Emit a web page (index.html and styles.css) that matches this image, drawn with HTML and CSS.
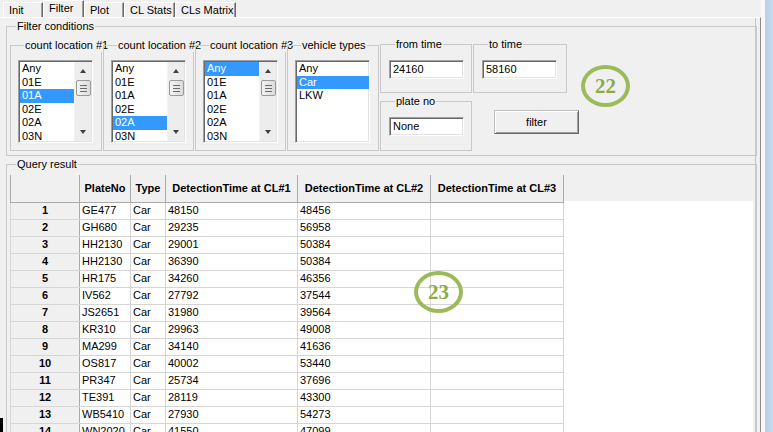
FILE: index.html
```html
<!DOCTYPE html>
<html>
<head>
<meta charset="utf-8">
<title>Filter</title>
<link rel="stylesheet" href="styles.css">
</head>
<body>
<div class="window">
  <div class="notebook">
    <div class="tabs">
      <div class="tab tab-init">Init</div>
      <div class="tab tab-filter selected">Filter</div>
      <div class="tab tab-plot">Plot</div>
      <div class="tab tab-stats">CL Stats</div>
      <div class="tab tab-matrix">CLs Matrix</div>
    </div>
    <div class="panel">
      <fieldset class="group filter-group">
        <legend>Filter conditions</legend>
        <div class="frames">
          <fieldset class="box box-cl1">
            <legend>count location #1</legend>
            <div class="listbox">
              <ul class="items">
                <li>Any</li><li>01E</li><li class="sel">01A</li><li>02E</li><li>02A</li><li>03N</li>
              </ul>
              <div class="vscroll"><span class="arrow up"></span><span class="thumb"><i></i><i></i><i></i></span><span class="arrow down"></span></div>
            </div>
          </fieldset>
          <fieldset class="box box-cl2">
            <legend>count location #2</legend>
            <div class="listbox">
              <ul class="items">
                <li>Any</li><li>01E</li><li>01A</li><li>02E</li><li class="sel">02A</li><li>03N</li>
              </ul>
              <div class="vscroll"><span class="arrow up"></span><span class="thumb"><i></i><i></i><i></i></span><span class="arrow down"></span></div>
            </div>
          </fieldset>
          <fieldset class="box box-cl3">
            <legend>count location #3</legend>
            <div class="listbox">
              <ul class="items">
                <li class="sel">Any</li><li>01E</li><li>01A</li><li>02E</li><li>02A</li><li>03N</li>
              </ul>
              <div class="vscroll"><span class="arrow up"></span><span class="thumb"><i></i><i></i><i></i></span><span class="arrow down"></span></div>
            </div>
          </fieldset>
          <fieldset class="box box-veh">
            <legend>vehicle types</legend>
            <div class="listbox">
              <ul class="items">
                <li>Any</li><li class="sel">Car</li><li>LKW</li>
              </ul>
            </div>
          </fieldset>
          <div class="col col-from">
            <fieldset class="box box-time">
              <legend>from time</legend>
              <div class="entry">24160</div>
            </fieldset>
            <fieldset class="box box-plate">
              <legend>plate no</legend>
              <div class="entry">None</div>
            </fieldset>
          </div>
          <div class="col col-to">
            <fieldset class="box box-time box-to">
              <legend>to time</legend>
              <div class="entry">58160</div>
            </fieldset>
            <button class="btn" type="button">filter</button>
          </div>
        </div>
      </fieldset>

      <fieldset class="group query-group">
        <legend>Query result</legend>
        <div class="grid">
          <table class="results">
            <colgroup>
              <col class="c-rh"><col class="c-plate"><col class="c-type"><col class="c-dt"><col class="c-dt2"><col class="c-dt2">
            </colgroup>
            <thead>
              <tr><th></th><th>PlateNo</th><th>Type</th><th>DetectionTime at CL#1</th><th>DetectionTime at CL#2</th><th>DetectionTime at CL#3</th></tr>
            </thead>
            <tbody>
              <tr><td class="rh">1</td><td>GE477</td><td>Car</td><td>48150</td><td>48456</td><td></td></tr>
              <tr><td class="rh">2</td><td>GH680</td><td>Car</td><td>29235</td><td>56958</td><td></td></tr>
              <tr><td class="rh">3</td><td>HH2130</td><td>Car</td><td>29001</td><td>50384</td><td></td></tr>
              <tr><td class="rh">4</td><td>HH2130</td><td>Car</td><td>36390</td><td>50384</td><td></td></tr>
              <tr><td class="rh">5</td><td>HR175</td><td>Car</td><td>34260</td><td>46356</td><td></td></tr>
              <tr><td class="rh">6</td><td>IV562</td><td>Car</td><td>27792</td><td>37544</td><td></td></tr>
              <tr><td class="rh">7</td><td>JS2651</td><td>Car</td><td>31980</td><td>39564</td><td></td></tr>
              <tr><td class="rh">8</td><td>KR310</td><td>Car</td><td>29963</td><td>49008</td><td></td></tr>
              <tr><td class="rh">9</td><td>MA299</td><td>Car</td><td>34140</td><td>41636</td><td></td></tr>
              <tr><td class="rh">10</td><td>OS817</td><td>Car</td><td>40002</td><td>53440</td><td></td></tr>
              <tr><td class="rh">11</td><td>PR347</td><td>Car</td><td>25734</td><td>37696</td><td></td></tr>
              <tr><td class="rh">12</td><td>TE391</td><td>Car</td><td>28119</td><td>43300</td><td></td></tr>
              <tr><td class="rh">13</td><td>WB5410</td><td>Car</td><td>27930</td><td>54273</td><td></td></tr>
              <tr><td class="rh">14</td><td>WN2020</td><td>Car</td><td>41550</td><td>47099</td><td></td></tr>
            </tbody>
          </table>
        </div>
      </fieldset>
    </div>
  </div>
  <div class="frame-gap"></div>
  <div class="frame-edge"></div>
</div>
<div class="marker marker-22">22</div>
<div class="marker marker-23">23</div>
<div class="corner-mark"></div>
</body>
</html>
```
FILE: styles.css
```css
* { box-sizing: border-box; }
html, body { margin: 0; padding: 0; }
body {
  width: 773px;
  height: 432px;
  overflow: hidden;
  position: relative;
  background: #f0f0f0;
  font-family: "Liberation Sans", Arial, sans-serif;
  font-size: 11px;
  color: #000;
}

.window { display: flex; height: 432px; }
.notebook { width: 761px; display: flex; flex-direction: column; }
.frame-gap { width: 4px; background: #f7f7f7; }
.frame-edge { width: 8px; background: linear-gradient(90deg, #b7cfe8, #c6dbf0); }

/* tabs */
.tabs { display: flex; align-items: flex-end; height: 17px; padding-left: 3px; }
.tab {
  height: 15px;
  line-height: 14px;
  padding-left: 5px;
  border-top: 1px solid #fff;
  border-left: 1px solid #fff;
  border-right: 1px solid #696969;
  box-shadow: inset -1px 0 0 #a0a0a0;
  white-space: nowrap;
}
.tab.selected { height: 17px; line-height: 14px; padding-left: 5px; }
.tab-init { width: 40px; }
.tab-filter { width: 41px; }
.tab-plot { width: 40px; }
.tab-stats { width: 51px; }
.tab-matrix { width: 61px; }

.panel {
  flex: 1;
  border-top: 1px solid #fff;
  border-right: 1px solid #8a8a8a;
  box-shadow: inset -4px 0 0 #f0f0f0, inset -5px 0 0 #c8c8c8;
  padding: 0 0 0 6px;
  overflow: hidden;
}

/* group frames */
fieldset { margin: 0; padding: 0; min-width: 0; }
legend { padding: 0 1px; line-height: 14px; white-space: nowrap; }

.group {
  width: 751px;
  border: 1px solid #c9c9c9;
}
.group > legend { margin-left: 6px; }
.filter-group { margin-top: 1px; padding: 5px 0 4px 3px; }
.query-group { margin-top: 1px; padding: 4px 0 0 3px; height: 300px; }

.frames { display: flex; gap: 1px; align-items: flex-start; }
.box { border: 1px solid #c9c9c9; }
.box > legend { margin-left: 6px; max-width: none; }

.box-cl1, .box-cl2, .box-cl3, .box-veh { padding: 8px 0 7px 7px; }
.box-cl1 { width: 92px; }
.box-cl2 { width: 91px; }
.box-cl3 { width: 91px; }
.box-veh { width: 92px; }

.col { display: flex; flex-direction: column; }
.col-from { width: 92px; gap: 1px; }
.col-to { width: 94px; margin-top: -1px; }
.box-time { padding: 9px 0 13px 8px; }
.col-from .box-time { margin-top: -1px; }
.box-plate { padding: 9px 0 14px 8px; }

/* listbox */
.listbox {
  display: flex;
  width: 75px;
  height: 83px;
  background: #fff;
  border: 1px solid;
  border-color: #a0a0a0 #fff #fff #a0a0a0;
  box-shadow: inset 1px 1px 0 #696969, inset -1px -1px 0 #e3e3e3;
  padding: 1px 0 0 1px;
  overflow: hidden;
}
.items { list-style: none; margin: 0; padding: 0; flex: 1; }
.items li { height: 13.5px; line-height: 13.5px; padding-left: 2px; white-space: nowrap; }
.items li.sel { background: #3399ff; color: #fff; }

.vscroll {
  width: 17px;
  margin-bottom: 1px;
  margin-right: 1px;
  background: #ededed;
  border-left: 1px solid #f4f4f4;
  display: flex;
  flex-direction: column;
  align-items: center;
}
.arrow { width: 0; height: 0; border-left: 3.5px solid transparent; border-right: 3.5px solid transparent; }
.arrow.up { border-bottom: 4px solid #404040; margin-top: 7px; }
.arrow.down { border-top: 4px solid #404040; margin-top: auto; margin-bottom: 7px; }
.thumb {
  margin-top: 7px;
  width: 15px;
  height: 16px;
  border: 1px solid #9a9a9a;
  border-radius: 2px;
  background: linear-gradient(90deg, #f2f2f2, #dcdcdc);
  display: flex;
  flex-direction: column;
  align-items: center;
  justify-content: center;
  gap: 2px;
}
.thumb i { display: block; width: 7px; height: 1px; background: #6a6a6a; }

/* entry */
.entry {
  width: 75px;
  height: 19px;
  background: #fff;
  border: 1px solid;
  border-color: #a0a0a0 #fff #fff #a0a0a0;
  box-shadow: inset 1px 1px 0 #696969, inset -1px -1px 0 #e3e3e3;
  line-height: 17px;
  padding-left: 3px;
}

/* button */
.btn {
  margin: 17px 0 0 21px;
  width: 85px;
  height: 24px;
  padding: 0;
  font: inherit;
  color: #000;
  background: #f0f0f0;
  border: 1px solid;
  border-color: #bdbdbd #696969 #696969 #bdbdbd;
  box-shadow: inset 1px 1px 0 #fff, inset -1px -1px 0 #a0a0a0;
}

/* results grid */
.grid {
  width: 743px;
  height: 270px;
  overflow: hidden;
  background: linear-gradient(#f0f0f0 26px, #fff 26px);
}
.results { border-collapse: collapse; table-layout: fixed; width: 554px; }
.c-rh { width: 69px; }
.c-plate { width: 51px; }
.c-type { width: 35px; }
.c-dt { width: 132px; }
.c-dt2 { width: 133px; }
.results thead tr { height: 27px; }
.results tbody tr { height: 17px; }
.results th {
  padding: 0;
  background: #f0f0f0;
  border: 1px solid #ababab;
  font-weight: bold;
  text-align: center;
  white-space: nowrap;
  border-top: 0;
}
.results td {
  padding: 0 0 0 2px;
  border: 1px solid #d5d5d5;
  white-space: nowrap;
  line-height: 15px;
}
.results td.rh {
  background: #f0f0f0;
  font-weight: bold;
  text-align: center;
  padding: 0;
  border-color: #d5d5d5 #ababab #d5d5d5 #d5d5d5;
}

/* annotation markers */
.marker {
  position: absolute;
  width: 49px;
  height: 42px;
  border: 4px solid #9bbb59;
  border-radius: 50%;
  color: #8aab45;
  font-family: "Liberation Serif", "Times New Roman", serif;
  font-weight: bold;
  font-size: 21px;
  display: flex;
  align-items: center;
  justify-content: center;
  background: transparent;
}
.marker-22 { left: 581px; top: 65px; }
.marker-23 { left: 414px; top: 271px; }

.corner-mark {
  position: absolute;
  left: 0;
  top: 418px;
  width: 3px;
  height: 14px;
  background: #000;
}
```
